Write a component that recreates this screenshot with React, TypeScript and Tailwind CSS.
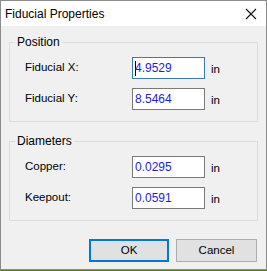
export default function App() {
  const font = { fontFamily: '"Liberation Sans", Arial, sans-serif' };
  return (
    <div
      className="w-[267px] h-[271px] bg-[#5a7a2a] text-[11.5px] text-black"
      style={font}
    >
      <div className="w-[267px] h-[270px] border border-[#8c8c8c] bg-[#f0f0f0] flex flex-col">
        {/* title bar */}
        <div className="h-[25px] bg-white flex items-center justify-between pl-[4px] pr-[9px]">
          <span className="text-[12px] pt-[1px]">Fiducial Properties</span>
          <svg width="12" height="12" viewBox="0 0 12 12" className="mt-[1px]">
            <path d="M1 1 L11 11 M11 1 L1 11" stroke="#111" strokeWidth="1.1" />
          </svg>
        </div>

        <div className="flex flex-col px-[8px] pt-[9px]">
          <Group title="Position">
            <Row label="Fiducial X:" value="4.9529" focused />
            <Row label="Fiducial Y:" value="8.5464" />
          </Group>
          <div className="h-[12px]" />
          <Group title="Diameters">
            <Row label="Copper:" value="0.0295" />
            <Row label="Keepout:" value="0.0591" />
          </Group>

          <div className="flex justify-end gap-[7px] mt-[18px] pr-[1px]">
            <button className="w-[80px] h-[23px] bg-[#e1e1e1] border-2 border-[#0078d7]">
              OK
            </button>
            <button className="w-[81px] h-[23px] bg-[#e1e1e1] border border-[#adadad]">
              Cancel
            </button>
          </div>
        </div>
      </div>
    </div>
  );
}

function Group({ title, children }: { title: string; children: React.ReactNode }) {
  return (
    <fieldset className="border border-[#dcdcdc] rounded-none px-[15px] pt-[7px] pb-[11px] flex flex-col gap-[9px]">
      <legend className="-ml-[10px] px-[2px] leading-[15px] text-[12px]">{title}</legend>
      {children}
    </fieldset>
  );
}

function Row({ label, value, focused }: { label: string; value: string; focused?: boolean }) {
  return (
    <div className="flex items-center">
      <span className="w-[107px]">{label}</span>
      <div
        className={
          "w-[73px] h-[22px] bg-white border flex items-center pl-[2px] text-[#1e1ed8] text-[12px] " +
          (focused ? "border-[#3c7ab5]" : "border-[#7a7a7a]")
        }
      >
        {focused && <span className="w-[1px] h-[15px] bg-black -mr-[1px]" />}
        {value}
      </div>
      <span className="ml-[6px] mt-[4px]">in</span>
    </div>
  );
}
